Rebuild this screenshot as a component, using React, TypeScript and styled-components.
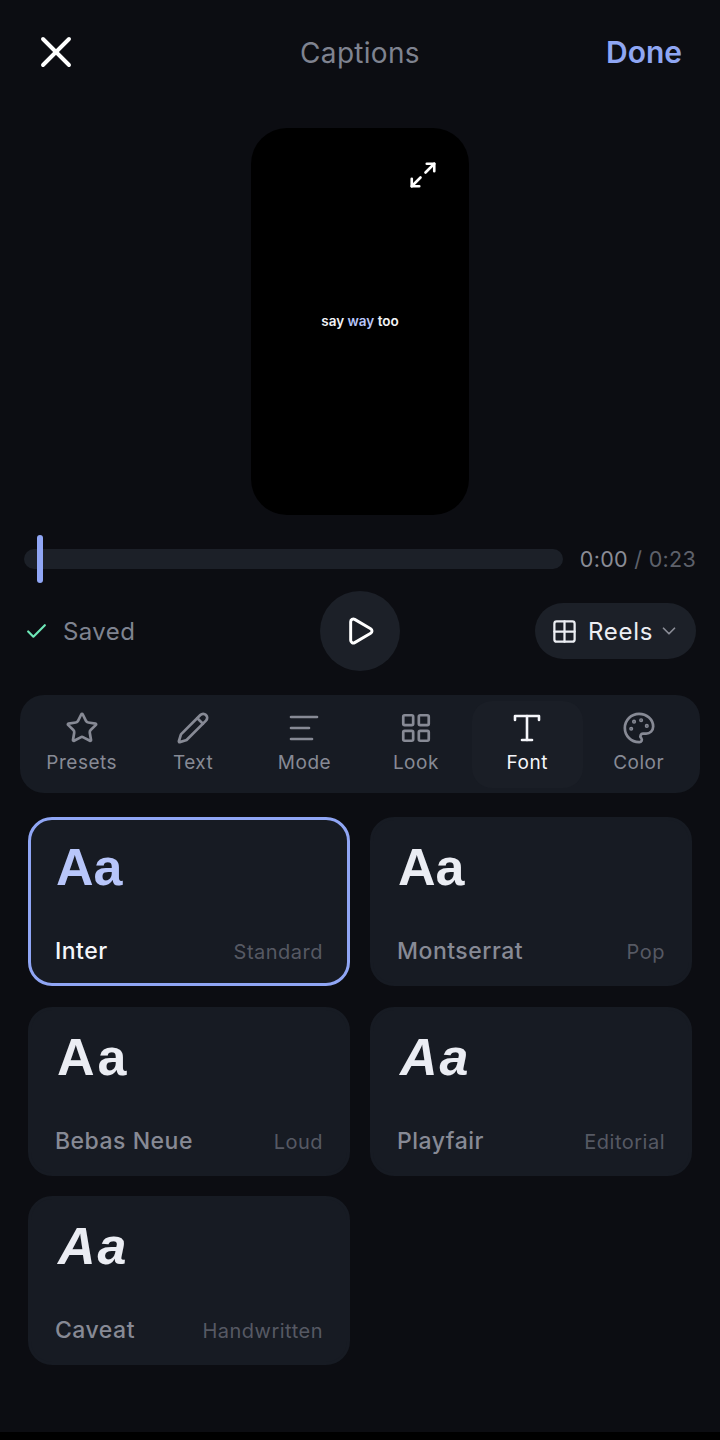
import * as React from 'react';
import styled, { createGlobalStyle } from 'styled-components';
import {
  Check,
  ChevronDown,
  Grid2x2,
  LayoutGrid,
  Maximize2,
  Palette,
  Pencil,
  Play,
  Star,
  X,
} from 'lucide-react';

const GlobalStyle = createGlobalStyle`
  html, body {
    margin: 0;
    padding: 0;
    background: #000;
  }
  * {
    box-sizing: border-box;
  }
`;

const ModeIcon: React.FC = () => (
  <svg width="34" height="34" viewBox="0 0 34 34" fill="none" stroke="currentColor" strokeWidth="2.6" strokeLinecap="round">
    <path d="M4 6h26" />
    <path d="M4 17h18" />
    <path d="M4 28h21" />
  </svg>
);

const SerifT: React.FC = () => (
  <svg width="30" height="30" viewBox="0 0 30 30" fill="none" stroke="currentColor" strokeWidth="2.6" strokeLinecap="round" strokeLinejoin="round">
    <path d="M3 7V3h24v4" />
    <path d="M15 3v24" />
    <path d="M10 27h10" />
  </svg>
);

const tabs = [
  { label: 'Presets', icon: <Star size={34} strokeWidth={1.9} /> },
  { label: 'Text', icon: <Pencil size={34} strokeWidth={1.9} /> },
  { label: 'Mode', icon: <ModeIcon /> },
  { label: 'Look', icon: <LayoutGrid size={34} strokeWidth={1.9} /> },
  { label: 'Font', icon: <SerifT />, active: true },
  { label: 'Color', icon: <Palette size={34} strokeWidth={1.9} /> },
];

const fonts = [
  { name: 'Inter', tag: 'Standard', selected: true },
  { name: 'Montserrat', tag: 'Pop' },
  { name: 'Bebas Neue', tag: 'Loud', spaced: true },
  { name: 'Playfair', tag: 'Editorial', slanted: true },
  { name: 'Caveat', tag: 'Handwritten', slanted: true },
];

export default function App() {
  return (
    <Screen>
      <GlobalStyle />
      <Header>
        <CloseButton>
          <X size={52} strokeWidth={1.8} />
        </CloseButton>
        <Title>Captions</Title>
        <DoneButton>Done</DoneButton>
      </Header>

      <PreviewWrap>
        <Preview>
          <ExpandButton>
            <Maximize2 size={30} strokeWidth={2.1} />
          </ExpandButton>
          <CaptionLine>
            say <Hot>way</Hot> too
          </CaptionLine>
        </Preview>
      </PreviewWrap>

      <ScrubRow>
        <Track>
          <Playhead />
        </Track>
        <Time>
          0:00 <TimeDim>/ 0:23</TimeDim>
        </Time>
      </ScrubRow>

      <ControlsRow>
        <SavedState>
          <Check size={25} strokeWidth={2.1} />
          <span>Saved</span>
        </SavedState>
        <PlayButton>
          <Play size={32} strokeWidth={2.2} />
        </PlayButton>
        <FormatPill>
          <Grid2x2 size={27} strokeWidth={2} />
          <span>Reels</span>
          <ChevronDown size={22} strokeWidth={1.9} />
        </FormatPill>
      </ControlsRow>

      <TabBar>
        {tabs.map((tab) => (
          <Tab key={tab.label} $active={tab.active}>
            <TabIcon>{tab.icon}</TabIcon>
            <TabLabel>{tab.label}</TabLabel>
          </Tab>
        ))}
      </TabBar>

      <FontGrid>
        {fonts.map((font) => (
          <FontCard key={font.name} $selected={font.selected}>
            <Sample $selected={font.selected} $spaced={font.spaced} $slanted={font.slanted}>
              Aa
            </Sample>
            <CardFooter>
              <FontName $selected={font.selected}>{font.name}</FontName>
              <FontTag>{font.tag}</FontTag>
            </CardFooter>
          </FontCard>
        ))}
      </FontGrid>
    </Screen>
  );
}

const Screen = styled.div`
  width: 720px;
  height: 1432px;
  background: #0c0d12;
  font-family: Inter, 'Liberation Sans', sans-serif;
  overflow: hidden;
`;

const Header = styled.header`
  display: flex;
  align-items: center;
  justify-content: space-between;
  height: 104px;
  padding: 0 38px 0 30px;
  position: relative;
`;

const CloseButton = styled.div`
  display: flex;
  color: #fff;
`;

const Title = styled.div`
  position: absolute;
  left: 0;
  right: 0;
  padding-top: 1px;
  text-align: center;
  font-size: 28px;
  letter-spacing: 0.3px;
  color: #7f8390;
`;

const DoneButton = styled.div`
  font-size: 30px;
  font-weight: 600;
  color: #8fa6f3;
`;

const PreviewWrap = styled.div`
  display: flex;
  justify-content: center;
  padding-top: 24px;
`;

const Preview = styled.div`
  position: relative;
  display: flex;
  align-items: center;
  justify-content: center;
  width: 218px;
  height: 387px;
  border-radius: 36px;
  background: #000;
`;

const ExpandButton = styled.div`
  position: absolute;
  top: 32px;
  right: 31px;
  display: flex;
  color: #fff;
`;

const CaptionLine = styled.div`
  position: relative;
  top: -1px;
  font-size: 13.500px;
  font-weight: 600;
  color: #f2f3f7;
`;

const Hot = styled.span`
  color: #b8c6fa;
`;

const ScrubRow = styled.div`
  display: flex;
  align-items: center;
  justify-content: space-between;
  height: 48px;
  margin-top: 20px;
  padding: 0 24px;
`;

const Track = styled.div`
  position: relative;
  width: 539px;
  height: 20px;
  border-radius: 10px;
  background: #1c2028;
`;

const Playhead = styled.div`
  position: absolute;
  top: -14px;
  left: 13px;
  width: 6px;
  height: 48px;
  border-radius: 3px;
  background: #90a6f5;
`;

const Time = styled.div`
  font-size: 21.500px;
  letter-spacing: 0.3px;
  color: #8a8c96;
`;

const TimeDim = styled.span`
  color: #5e616b;
`;

const ControlsRow = styled.div`
  position: relative;
  display: flex;
  align-items: center;
  justify-content: space-between;
  height: 80px;
  margin-top: 8px;
  padding: 0 24px;
`;

const SavedState = styled.div`
  display: flex;
  align-items: center;
  gap: 14px;
  font-size: 24px;
  letter-spacing: 0.4px;
  color: #7f8390;

  svg {
    color: #6ee7b7;
  }
`;

const PlayButton = styled.div`
  position: absolute;
  left: 320px;
  top: 0;
  display: flex;
  align-items: center;
  justify-content: center;
  width: 80px;
  height: 80px;
  border-radius: 50%;
  background: #1c2028;
  color: #fff;
`;

const FormatPill = styled.div`
  display: flex;
  align-items: center;
  gap: 10px;
  width: 161px;
  height: 56px;
  padding-left: 16px;
  border-radius: 28px;
  background: #1c2028;
  font-size: 24px;
  font-weight: 400;
  letter-spacing: 0.7px;
  color: #eceef3;

  svg:last-child {
    color: #8a8c96;
    margin-left: -5px;
  }
`;

const TabBar = styled.nav`
  display: grid;
  grid-template-columns: repeat(6, 111.400px);
  align-items: center;
  height: 98px;
  margin: 24px 20px 0;
  padding: 0 6px;
  border-radius: 24px;
  background: #171b23;
`;

const Tab = styled.div<{ $active?: boolean }>`
  display: flex;
  flex-direction: column;
  align-items: center;
  justify-content: center;
  height: 87px;
  gap: 6px;
  padding-bottom: 3px;
  border-radius: 20px;
  background: ${(p) => (p.$active ? '#1a1e26' : 'transparent')};
  color: ${(p) => (p.$active ? '#f5f6fa' : '#878a95')};
`;

const TabIcon = styled.div`
  display: flex;
  align-items: center;
  justify-content: center;
  height: 34px;
`;

const TabLabel = styled.div`
  font-size: 19px;
  letter-spacing: 0.5px;
  line-height: 24px;
`;

const FontGrid = styled.div`
  display: grid;
  grid-template-columns: 322px 322px;
  grid-auto-rows: 169px;
  column-gap: 20px;
  row-gap: 20.500px;
  margin-top: 24px;
  padding: 0 28px;
`;

const FontCard = styled.div<{ $selected?: boolean }>`
  display: flex;
  flex-direction: column;
  justify-content: space-between;
  padding: 17px 24px 18px 24px;
  border-radius: 24px;
  background: #171b23;
  border: 3px solid ${(p) => (p.$selected ? '#90a6f5' : '#171b23')};
`;

const Sample = styled.div<{ $selected?: boolean; $spaced?: boolean; $slanted?: boolean }>`
  padding-left: ${(p) => (p.$slanted ? '3px' : p.$spaced ? '2px' : '1px')};
  font-family: 'Liberation Sans', Arial, sans-serif;
  font-size: 52px;
  font-weight: 700;
  font-style: ${(p) => (p.$slanted ? 'italic' : 'normal')};
  letter-spacing: ${(p) => (p.$spaced ? '3px' : p.$slanted ? '2px' : '0')};
  line-height: 60px;
  color: ${(p) => (p.$selected ? '#b8c6fa' : '#ebedf3')};
`;

const CardFooter = styled.div`
  display: flex;
  align-items: baseline;
  justify-content: space-between;
`;

const FontName = styled.div<{ $selected?: boolean }>`
  font-size: 23px;
  font-weight: 500;
  letter-spacing: 0.5px;
  color: ${(p) => (p.$selected ? '#f5f6fa' : '#878a95')};
`;

const FontTag = styled.div`
  font-size: 20px;
  letter-spacing: 0.5px;
  color: #565963;
`;
